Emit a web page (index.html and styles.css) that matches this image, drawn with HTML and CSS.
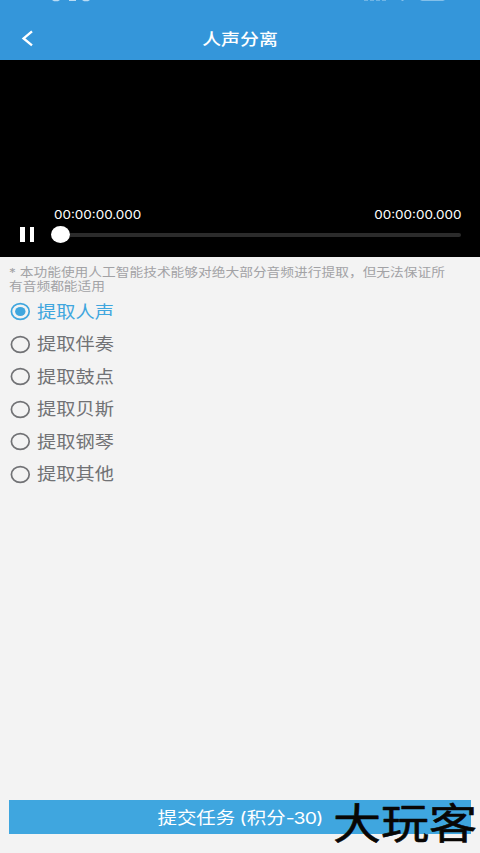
FILE: index.html
```html
<!DOCTYPE html>
<html lang="zh-CN">
<head>
<meta charset="utf-8">
<title>人声分离</title>
<link rel="stylesheet" href="styles.css">
</head>
<body>
<div class="app">
  <header class="header">
    <svg class="status" viewBox="0 0 480 3" width="480" height="3"><g fill="#b9dcf5"><path d="M52 0h8l-2 1.3h-4zM69 0h7v1h-7zM82 0h8l-2 1.3h-4z"/><path d="M364 0h4v.7h-4zM370 0h4v.7h-4zM376 0h4v.7h-4zM382 0h4v.7h-4zM401 0h3l-1 1h-1zM420 0h25l-2 1.1h-21z" opacity=".6"/></g></svg>
    <svg class="back" viewBox="0 0 12 18" width="12" height="18"><path d="M11 1.4 2.6 8.4l8.4 7" fill="none" stroke="#fff" stroke-width="2.4"/></svg>
    <h1 class="title"><span class="wide">人声分离</span></h1>
  </header>
  <section class="player">
    <div class="times"><span class="time start">00:00:00.000</span><span class="time end">00:00:00.000</span></div>
    <div class="controls">
      <div class="pause"><i></i><i></i></div>
      <div class="thumb"></div>
      <div class="track"></div>
    </div>
  </section>
  <main class="content">
    <p class="note">* 本功能使用人工智能技术能够对绝大部分音频进行提取，但无法保证所<br>有音频都能适用</p>
    <ul class="options">
      <li class="option selected"><svg class="radio" viewBox="0 0 22 20"><ellipse cx="11.3" cy="10.5" rx="8.9" ry="7.9"/><ellipse class="dot" cx="11.3" cy="10.5" rx="5.2" ry="4.6"/></svg><span class="label">提取人声</span></li>
      <li class="option"><svg class="radio" viewBox="0 0 22 20"><ellipse cx="11.3" cy="10.5" rx="8.9" ry="7.9"/></svg><span class="label">提取伴奏</span></li>
      <li class="option"><svg class="radio" viewBox="0 0 22 20"><ellipse cx="11.3" cy="10.5" rx="8.9" ry="7.9"/></svg><span class="label">提取鼓点</span></li>
      <li class="option"><svg class="radio" viewBox="0 0 22 20"><ellipse cx="11.3" cy="10.5" rx="8.9" ry="7.9"/></svg><span class="label">提取贝斯</span></li>
      <li class="option"><svg class="radio" viewBox="0 0 22 20"><ellipse cx="11.3" cy="10.5" rx="8.9" ry="7.9"/></svg><span class="label">提取钢琴</span></li>
      <li class="option"><svg class="radio" viewBox="0 0 22 20"><ellipse cx="11.3" cy="10.5" rx="8.9" ry="7.9"/></svg><span class="label">提取其他</span></li>
    </ul>
  </main>
  <footer class="footer">
    <button class="submit"><span class="wide">提交任务 (积分<span class="cost">-30)</span></span></button>
  </footer>
  <svg class="watermark" width="150" height="57" viewBox="0 0 150 57"><text x="3" y="43" textLength="144" lengthAdjust="spacingAndGlyphs">大玩客</text></svg>
</div>
</body>
</html>
```

FILE: styles.css
```css
* { box-sizing: border-box; margin: 0; padding: 0; }
body { background: #f3f3f3; font-family: Inter, "Noto Sans CJK SC", sans-serif; }
.app { position: relative; display: flex; flex-direction: column; width: 480px; height: 853px; overflow: hidden; }
.header { position: relative; height: 60px; padding: 17px 0 0 21px; display: flex; align-items: center; background: #3496da; color: #fff; }
.status { position: absolute; top: 0; left: 0; }
.back { flex: none; }
.title { flex: 1; margin-right: 33px; padding-top: 1px; text-align: center; font-size: 16px; line-height: 24px; font-weight: 500; }
.wide { display: inline-block; transform: scaleX(1.18); white-space: pre; }

.player { height: 197px; background: #000; color: #fff; padding: 146px 18px 0 20px; }
.times { display: flex; justify-content: space-between; padding-left: 34px; height: 18px; }
.time { font-size: 11.8px; line-height: 18px; }
.start { transform: scaleX(1.14); transform-origin: left; }
.end { transform: scaleX(1.14); transform-origin: right; }
.controls { display: flex; align-items: center; height: 20px; padding-top: 1px; }
.pause { display: flex; gap: 5px; width: 31px; }
.pause i { width: 4.5px; height: 15px; background: #fff; }
.thumb { width: 19px; height: 17px; border-radius: 50%; background: #fff; }
.track { flex: 1; margin-right: 1px; height: 4px; border-radius: 0 2px 2px 0; background: #2b2b2b; }

.content { flex: 1; padding: 9px 9px 0; }
.note { width: 400px; font-size: 12px; line-height: 14px; color: #a2a2a5; transform: scaleX(1.143); transform-origin: left; white-space: nowrap; }
.options { list-style: none; margin-top: 1px; }
.option { display: flex; align-items: center; height: 32.5px; color: #717275; }
.radio { width: 22px; height: 20px; fill: none; stroke: currentColor; stroke-width: 1.7; }
.dot { fill: currentColor; stroke: none; }
.label { margin-left: 6px; padding-top: 1px; font-size: 17px; line-height: 24px; transform: scaleX(1.13); transform-origin: left; }
.selected { color: #3fa6de; }

.footer { padding: 0 9px 19px; }
.submit { display: block; width: 100%; height: 34px; padding-top: 1px; border: 0; border-radius: 0; background: #3fa6df; color: #fff; font: 400 16.5px/34px Inter, "Noto Sans CJK SC", sans-serif; }
.submit .wide { word-spacing: -1px; }
.cost { letter-spacing: -0.7px; }
.watermark { position: absolute; left: 330px; top: 796px; font: 400 41.5px "Noto Sans CJK SC", sans-serif; fill: #080604; stroke: #080604; stroke-width: 0.6; stroke-linejoin: round; }
```
